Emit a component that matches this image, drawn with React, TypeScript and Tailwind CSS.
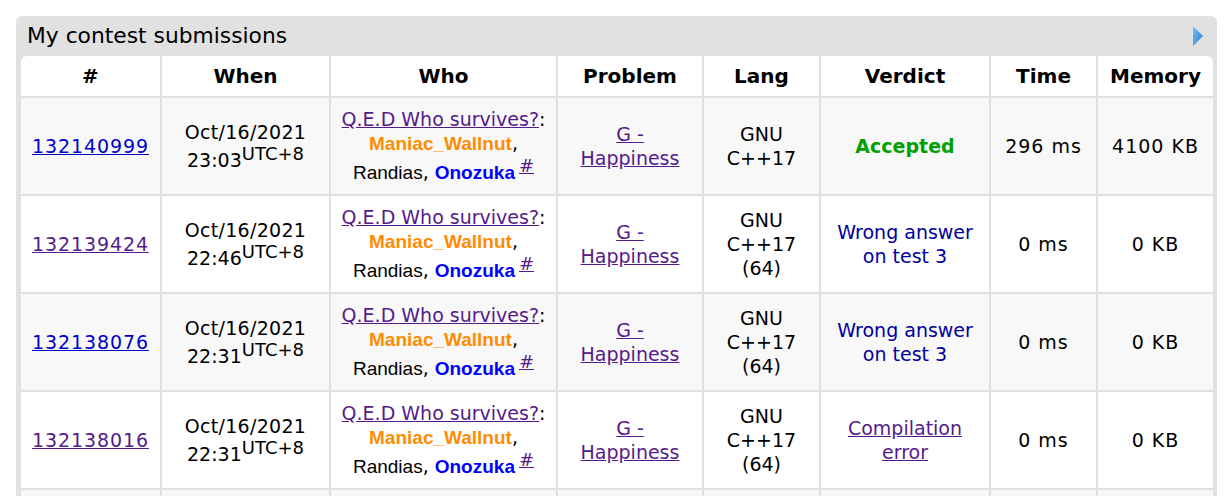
import React from "react";

type Row = {
  id: string;
  visited: boolean;
  time: string;
  lang: string[];
  verdict: "ok" | "wa" | "ce";
  runTime: string;
  memory: string;
};

const rows: Row[] = [
  { id: "132140999", visited: false, time: "23:03", lang: ["GNU", "C++17"], verdict: "ok", runTime: "296 ms", memory: "4100 KB" },
  { id: "132139424", visited: true, time: "22:46", lang: ["GNU", "C++17", "(64)"], verdict: "wa", runTime: "0 ms", memory: "0 KB" },
  { id: "132138076", visited: false, time: "22:31", lang: ["GNU", "C++17", "(64)"], verdict: "wa", runTime: "0 ms", memory: "0 KB" },
  { id: "132138016", visited: true, time: "22:31", lang: ["GNU", "C++17", "(64)"], verdict: "ce", runTime: "0 ms", memory: "0 KB" },
  { id: "132137911", visited: true, time: "22:29", lang: ["GNU", "C++17", "(64)"], verdict: "ce", runTime: "0 ms", memory: "0 KB" },
];

const headers = ["#", "When", "Who", "Problem", "Lang", "Verdict", "Time", "Memory"];
const widths = ["w-[139px]", "w-[169px]", "w-[227px]", "w-[146px]", "w-[117px]", "w-[170px]", "w-[107px]", "w-[117px]"];

const visitedLink = "text-[#551a8b] underline";
const handle = "font-['Liberation_Sans',Arial,sans-serif] font-bold";
// raised text that pushes its line down, like the browser default <sup>
const supCls = "static align-super text-[18px] leading-[20px]";

function Verdict({ kind }: { kind: Row["verdict"] }) {
  if (kind === "ok") return <span className="font-bold text-[#00a000]">Accepted</span>;
  if (kind === "wa")
    return (
      <span className="text-[#0000a0]">
        Wrong answer
        <br />
        on test 3
      </span>
    );
  return (
    <a className={visitedLink}>
      Compilation
      <br />
      error
    </a>
  );
}

export default function App() {
  return (
    <div className="min-h-screen bg-white pt-4 pl-4 pr-[7px] font-['DejaVu_Sans',Verdana,sans-serif] text-[19px] leading-[24px] text-black">
      <div className="rounded-[6px] bg-[#e1e1e1] pl-[5px] pr-[4px]">
        <div className="flex h-10 items-center justify-between pl-[6px] pr-[9px]">
          <span className="text-[21.8px]">My contest submissions</span>
          <svg width="12" height="21" viewBox="0 0 12 21" aria-hidden="true">
            <defs>
              <linearGradient id="arr" x1="0" y1="0" x2="1" y2="1">
                <stop offset="0" stopColor="#7cc4f4" />
                <stop offset="1" stopColor="#2479cf" />
              </linearGradient>
            </defs>
            <path d="M1 0 L11 10 L1 20 Z" fill="url(#arr)" />
          </svg>
        </div>
        <table className="w-full table-fixed border-separate border-spacing-0 overflow-hidden rounded-t-[6px] bg-white">
          <colgroup>
            {widths.map((w, i) => (
              <col key={i} className={w} />
            ))}
          </colgroup>
          <thead>
            <tr>
              {headers.map((h, i) => (
                <th key={h} className={`h-10 text-center text-[20px] font-bold ${i > 0 ? "border-l-2 border-[#e1e1e1]" : ""}`}>
                  {h}
                </th>
              ))}
            </tr>
          </thead>
          <tbody>
            {rows.map((r, idx) => {
              const bg = idx % 2 === 0 ? "bg-[#f8f8f8]" : "bg-white";
              const cell = `h-[98px] border-t-2 border-[#e1e1e1] text-center align-middle ${bg}`;
              return (
                <tr key={r.id}>
                  <td className={`${cell} tracking-[0.9px]`}>
                    <a className={r.visited ? visitedLink : "text-[#0000cc] underline"}>{r.id}</a>
                  </td>
                  <td className={`${cell} border-l-2`}>
                    <span className="tracking-[0.3px]">Oct/16/2021</span>
                    <br />
                    {r.time}
                    <sup className={supCls}>UTC+8</sup>
                  </td>
                  <td className={`${cell} border-l-2`}>
                    <a className={visitedLink}>Q.E.D Who survives?</a>:
                    <br />
                    <span className={`${handle} text-[#ff8c00]`}>Maniac_Wallnut</span>,
                    <br />
                    <span className="font-['Liberation_Sans',Arial,sans-serif]">Randias</span>,{" "}
                    <span className={`${handle} text-[#0000ff]`}>Onozuka</span>
                    <sup className={`${supCls} ml-1`}>
                      <a className={visitedLink}>#</a>
                    </sup>
                  </td>
                  <td className={`${cell} border-l-2`}>
                    <a className={visitedLink}>
                      G -
                      <br />
                      Happiness
                    </a>
                  </td>
                  <td className={`${cell} border-l-2`}>
                    {r.lang.map((l, i) => (
                      <div key={i}>{l}</div>
                    ))}
                  </td>
                  <td className={`${cell} border-l-2`}>
                    <Verdict kind={r.verdict} />
                  </td>
                  <td className={`${cell} border-l-2 tracking-[1px]`}>{r.runTime}</td>
                  <td className={`${cell} border-l-2 tracking-[1px]`}>{r.memory}</td>
                </tr>
              );
            })}
          </tbody>
        </table>
      </div>
    </div>
  );
}
